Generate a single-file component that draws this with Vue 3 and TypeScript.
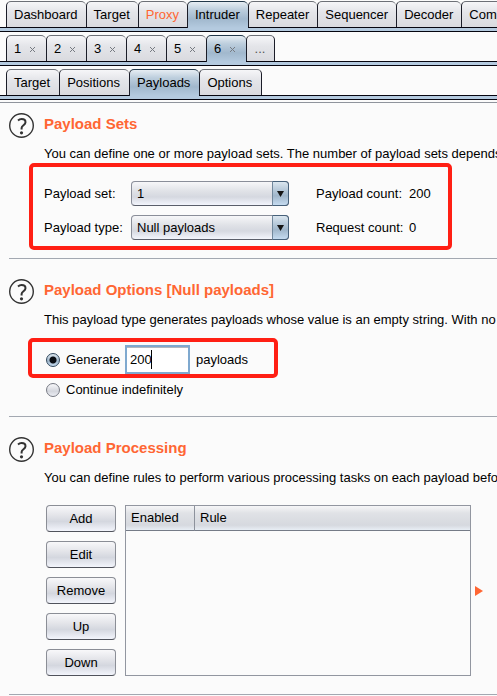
<script setup lang="ts">
import { ref } from 'vue'

const mainTabs: string[] = ['Dashboard', 'Target', 'Proxy', 'Intruder', 'Repeater', 'Sequencer', 'Decoder', 'Comparer']
const attackTabs: string[] = ['1', '2', '3', '4', '5', '6']
const panelTabs: string[] = ['Target', 'Positions', 'Payloads', 'Options']
const ruleActions: string[] = ['Add', 'Edit', 'Remove', 'Up', 'Down']

const mainTab = ref('Intruder')
const attackTab = ref('6')
const panelTab = ref('Payloads')
const payloadSet = ref('1')
const payloadType = ref('Null payloads')
const mode = ref('generate')
const amount = ref('200')
</script>

<template>
  <div class="app">
    <nav class="tabs">
      <button
        v-for="t in mainTabs"
        :key="t"
        type="button"
        class="tab"
        :class="{ selected: mainTab === t, alert: t === 'Proxy' }"
        @click="mainTab = t"
      >{{ t }}</button>
    </nav>
    <nav class="tabs">
      <button
        v-for="t in attackTabs"
        :key="t"
        type="button"
        class="tab numbered"
        :class="{ selected: attackTab === t }"
        @click="attackTab = t"
      >
        <span>{{ t }}</span>
        <svg class="close" viewBox="0 0 7 7" aria-hidden="true"><path d="M1 1L6 6M6 1L1 6" /></svg>
      </button>
      <button type="button" class="tab more">...</button>
    </nav>
    <nav class="tabs wide">
      <button
        v-for="t in panelTabs"
        :key="t"
        type="button"
        class="tab"
        :class="{ selected: panelTab === t }"
        @click="panelTab = t"
      >{{ t }}</button>
    </nav>

    <main class="panel">
      <section class="section">
        <button type="button" class="help" aria-label="Help">
          <svg viewBox="0 0 26 26"><circle cx="12.5" cy="12.5" r="11.8" /><path d="M9 7.4C10 6.5 11.2 6 12.6 6C15 6 16.5 7.2 16.5 9.2C16.5 12 12.6 12.4 12.6 15V16.4" /><circle class="dot" cx="12.5" cy="19.8" r="1.6" /></svg>
        </button>
        <div class="content">
          <h2>Payload Sets</h2>
          <p>You can define one or more payload sets. The number of payload sets depends on the attack type</p>
          <div class="marked sets">
            <label for="set">Payload set:</label>
            <div class="combo">
              <select id="set" v-model="payloadSet"><option>1</option></select>
              <span class="drop"><svg viewBox="0 0 7 6" aria-hidden="true"><path d="M0 0H7L3.5 6Z" /></svg></span>
            </div>
            <span class="count">Payload count:</span><span>200</span>
            <label for="type">Payload type:</label>
            <div class="combo">
              <select id="type" v-model="payloadType"><option>Null payloads</option></select>
              <span class="drop"><svg viewBox="0 0 7 6" aria-hidden="true"><path d="M0 0H7L3.5 6Z" /></svg></span>
            </div>
            <span class="count">Request count:</span><span>0</span>
          </div>
        </div>
      </section>

      <section class="section">
        <button type="button" class="help" aria-label="Help">
          <svg viewBox="0 0 26 26"><circle cx="12.5" cy="12.5" r="11.8" /><path d="M9 7.4C10 6.5 11.2 6 12.6 6C15 6 16.5 7.2 16.5 9.2C16.5 12 12.6 12.4 12.6 15V16.4" /><circle class="dot" cx="12.5" cy="19.8" r="1.6" /></svg>
        </button>
        <div class="content">
          <h2>Payload Options [Null payloads]</h2>
          <p>This payload type generates payloads whose value is an empty string. With no payload markers configured</p>
          <div class="marked generate">
            <label class="radio"><input v-model="mode" type="radio" name="mode" value="generate">Generate</label>
            <div class="field">
              <input id="amount" v-model="amount" type="text" size="1">
              <span class="caret"></span>
            </div>
            <label for="amount">payloads</label>
          </div>
          <label class="radio endless"><input v-model="mode" type="radio" name="mode" value="endless">Continue indefinitely</label>
        </div>
      </section>

      <section class="section">
        <button type="button" class="help" aria-label="Help">
          <svg viewBox="0 0 26 26"><circle cx="12.5" cy="12.5" r="11.8" /><path d="M9 7.4C10 6.5 11.2 6 12.6 6C15 6 16.5 7.2 16.5 9.2C16.5 12 12.6 12.4 12.6 15V16.4" /><circle class="dot" cx="12.5" cy="19.8" r="1.6" /></svg>
        </button>
        <div class="content">
          <h2>Payload Processing</h2>
          <p>You can define rules to perform various processing tasks on each payload before it is used.</p>
          <div class="rules">
            <div class="actions">
              <button v-for="a in ruleActions" :key="a" type="button" class="action">{{ a }}</button>
            </div>
            <div class="list">
              <table>
                <thead>
                  <tr><th class="enabled">Enabled</th><th>Rule</th></tr>
                </thead>
              </table>
            </div>
            <svg class="pointer" viewBox="0 0 8 10" aria-hidden="true"><path d="M0 0L8 5L0 10Z" /></svg>
          </div>
        </div>
      </section>
    </main>
  </div>
</template>

<style>
html {
  background: #fbfbfb;
}
body {
  margin: 0;
}
</style>

<style scoped>
.app {
  font: 13px/18px "Liberation Sans", Arial, sans-serif;
  color: #000;
  overflow: hidden;
}
.app * {
  box-sizing: border-box;
}
button,
input,
select {
  font: inherit;
  color: inherit;
  margin: 0;
}

/* Tab rows */
.tabs {
  display: flex;
  height: 34px;
  padding: 1px 0 0 6px;
  background: linear-gradient(#fbfbfb 27px, #05050f 27px, #05050f 28px, #b4cadf 28px, #b4cadf 31px, #05050f 31px, #05050f 32px, #fbfbfb 32px);
}
.tab {
  flex: none;
  height: 26px;
  padding: 0 8px 0 7px;
  border: 1px solid #1b1d28;
  border-top-color: #6d7077;
  border-right-width: 0;
  border-bottom: 0;
  border-radius: 5px 5px 0 0;
  background: linear-gradient(#f6f6f8, #e4e5e9 40%, #d9dadf);
}
.tab:last-child {
  border-right-width: 1px;
}
.wide .tab {
  padding-right: 9px;
}
.tab.alert {
  color: #ff6633;
}
.tab.selected {
  height: 27px;
  padding-bottom: 1px;
  border-top-color: #22384a;
  background: linear-gradient(#e6edf3, #bdcedd 30%, #a1b8cd 65%, #b4cadf);
}
.numbered {
  display: flex;
  align-items: center;
  gap: 8px;
  width: 40px;
}
.close {
  flex: none;
  width: 7px;
  height: 7px;
  margin-top: 2px;
  stroke: #777b82;
  stroke-width: 1;
}
.more {
  width: 29px;
  color: #555;
}

/* Sections */
.panel {
  border-top: 1px solid #8f949c;
  padding-left: 9px;
}
.section {
  display: grid;
  grid-template-columns: 26px minmax(0, 1fr);
  column-gap: 9px;
  padding: 20px 0 17px;
  border-bottom: 1px solid #a3a8b1;
}
.section:first-child {
  padding: 10px 0 8px;
}
.section:last-child {
  padding-bottom: 18px;
}
.help {
  width: 26px;
  height: 26px;
  padding: 0;
  border: 0;
  background: none;
}
.help svg {
  display: block;
  width: 26px;
  height: 26px;
  fill: none;
  stroke: #333;
  stroke-width: 1.4;
}
.help path {
  stroke-width: 2;
}
.help .dot {
  fill: #333;
  stroke: none;
}
h2 {
  margin: 2px 0 12px;
  font-size: 15px;
  line-height: 18px;
  color: #ff6633;
}
p {
  margin: 0;
  white-space: nowrap;
}
.marked {
  border: 4px solid #ff1f14;
  border-radius: 5px;
}
.sets {
  display: grid;
  grid-template-columns: 87px 158px 120px auto;
  grid-auto-rows: 25px;
  row-gap: 9px;
  align-items: center;
  width: 423px;
  margin-left: -15px;
  padding: 14px 0 6px 11px;
}
.count {
  padding-left: 27px;
  white-space: nowrap;
}

.combo {
  position: relative;
  display: flex;
  height: 25px;
  border: 1px solid #8a8e99;
  border-bottom-color: #5a5e6a;
  border-radius: 4px;
  background: linear-gradient(#f7f7f9, #e0e2e7 40%, #d5d8e0 65%, #f3f5fc);
}
select {
  appearance: none;
  width: 100%;
  padding: 0 20px 0 5px;
  border: 0;
  background: none;
}
.drop {
  position: absolute;
  top: -1px;
  right: -1px;
  bottom: -1px;
  display: flex;
  align-items: center;
  justify-content: center;
  width: 17px;
  border: 1px solid #47617a;
  border-left-color: #71889c;
  border-radius: 0 4px 4px 0;
  background: linear-gradient(#dbe6ef, #b1c5d6 40%, #a0b6ca 60%, #c5dbf0);
  pointer-events: none;
}
.drop svg {
  width: 7px;
  height: 6px;
  fill: #151515;
}

/* Payload amount */
.generate {
  display: flex;
  align-items: center;
  width: 250px;
  height: 40px;
  margin: 9px 0 3px -16px;
  padding: 3px 0 0 14px;
}
.radio {
  display: flex;
  align-items: center;
  gap: 6px;
}
.generate .radio {
  width: 79px;
}
.endless {
  margin-left: 2px;
}
input[type='radio'] {
  appearance: none;
  width: 14px;
  height: 14px;
  border: 1px solid #767983;
  border-radius: 50%;
  background: linear-gradient(#f8f8fa, #d4d6dd 60%, #eceef4);
}
input[type='radio']:checked {
  border-color: #31485d;
  background: radial-gradient(circle, #080c12 3px, transparent 4px), linear-gradient(#dce6ee, #9eb5ca 60%, #c5dbf0);
}
.field {
  position: relative;
  width: 65px;
  margin-right: 6px;
}
.field input {
  display: block;
  width: 100%;
  height: 29px;
  padding: 0 3px;
  border: 2px solid #7fa9cf;
  background: #fff;
  outline: 0;
  box-shadow: inset 0 1px #b4b8be;
}
.caret {
  position: absolute;
  top: 5px;
  left: 26px;
  width: 1px;
  height: 19px;
  background: #000;
}

/* Processing rules */
.rules {
  display: flex;
  align-items: center;
  margin: 18px 14px 0 2px;
}
.actions {
  display: flex;
  flex-direction: column;
  gap: 9px;
  width: 70px;
  margin-right: 9px;
}
.action {
  height: 27px;
  padding: 0;
  border: 1px solid #8b8e96;
  border-bottom-color: #50535c;
  border-radius: 4px;
  background: linear-gradient(#f8f8fa, #e2e3e8 40%, #d4d7df 62%, #f3f5fc);
}
.list {
  flex: 1;
  align-self: stretch;
  border: 1px solid #9296a0;
}
table {
  width: 100%;
  border-collapse: separate;
  border-spacing: 0;
  table-layout: fixed;
}
th {
  height: 25px;
  padding: 0 5px;
  border-bottom: 1px solid #757b87;
  font-weight: 400;
  text-align: left;
  background: linear-gradient(#f6f6f8, #e0e2e6 30%, #d6d9df 80%, #e8eef5);
}
.enabled {
  width: 69px;
  border-right: 1px solid #8d929c;
}
.pointer {
  width: 8px;
  height: 10px;
  margin: 0 0 0 4px;
  fill: #ff6633;
}
</style>
